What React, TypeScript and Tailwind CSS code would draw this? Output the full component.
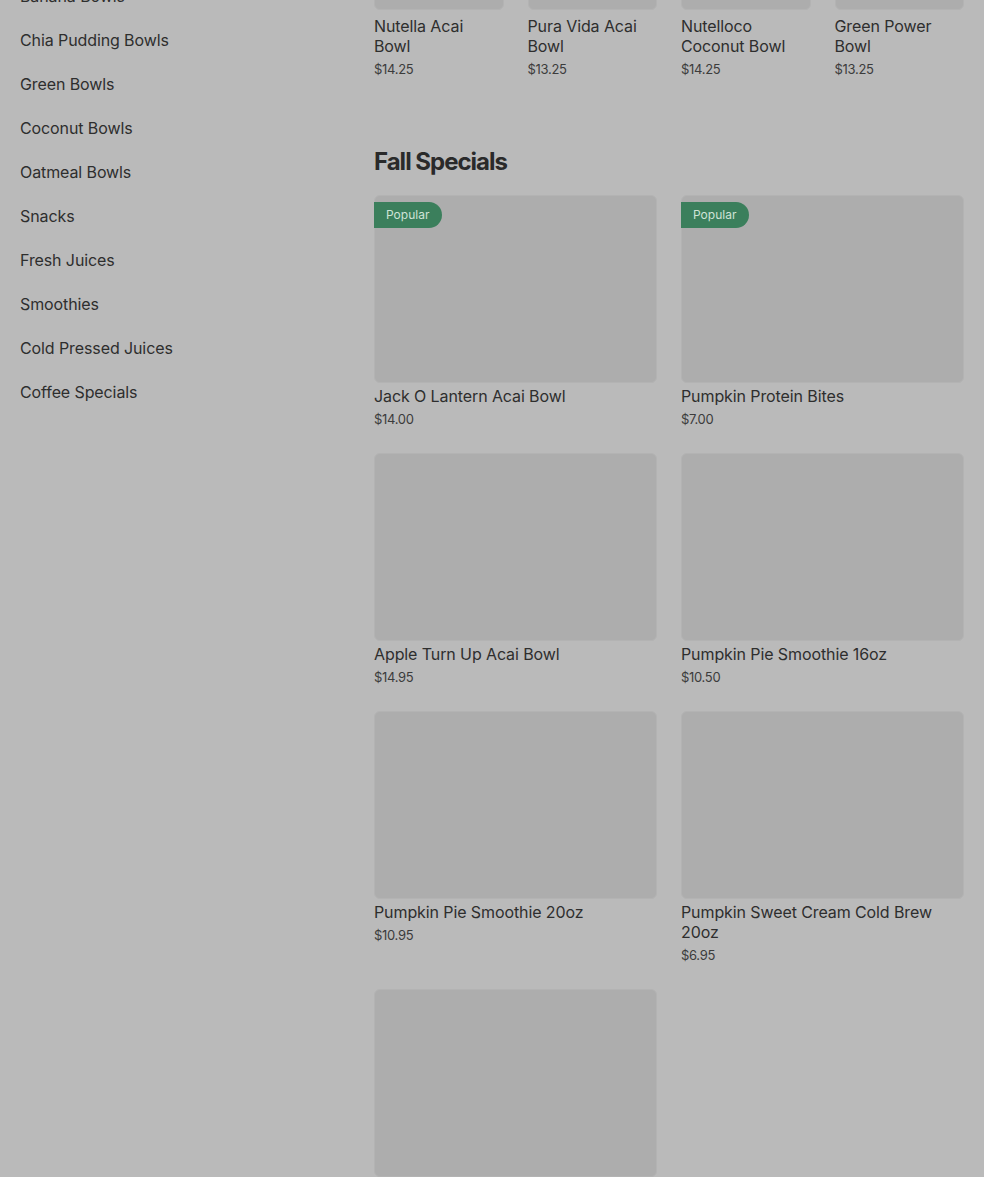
import React from "react";

const sidebar = [
  "Banana Bowls",
  "Chia Pudding Bowls",
  "Green Bowls",
  "Coconut Bowls",
  "Oatmeal Bowls",
  "Snacks",
  "Fresh Juices",
  "Smoothies",
  "Cold Pressed Juices",
  "Coffee Specials",
];

const topItems = [
  { name: "Nutella Acai Bowl", price: "$14.25" },
  { name: "Pura Vida Acai Bowl", price: "$13.25" },
  { name: "Nutelloco Coconut Bowl", price: "$14.25" },
  { name: "Green Power Bowl", price: "$13.25" },
];

const fall = [
  { name: "Jack O Lantern Acai Bowl", price: "$14.00", popular: true },
  { name: "Pumpkin Protein Bites", price: "$7.00", popular: true },
  { name: "Apple Turn Up Acai Bowl", price: "$14.95" },
  { name: "Pumpkin Pie Smoothie 16oz", price: "$10.50" },
  { name: "Pumpkin Pie Smoothie 20oz", price: "$10.95" },
  { name: "Pumpkin Sweet Cream Cold Brew 20oz", price: "$6.95" },
  { name: "", price: "" },
];

export default function App() {
  return (
    <div
      className="w-[984px] h-[1177px] overflow-hidden bg-[#bababa] text-[#303030]"
      style={{ fontFamily: "Inter, 'Noto Sans', sans-serif" }}
    >
      <div className="flex">
        <aside className="w-[374px] shrink-0 pl-5 -mt-[26px]">
          {sidebar.map((s) => (
            <div key={s} className="h-[44px] flex items-center text-[16px] font-normal tracking-[-0.1px] text-[#2e2e2e]">
              {s}
            </div>
          ))}
        </aside>
        <main className="flex-1 pr-5">
          <div className="-mt-[120px] grid grid-cols-4 gap-x-6">
            {topItems.map((it) => (
              <div key={it.name}>
                <div className="h-[130px] rounded-md bg-[#adadad] border border-[#b3b3b3]" />
                <div className="mt-[6px] pr-[10px] text-[16px] leading-[20px] font-normal tracking-[-0.1px] text-[#2e2e2e]">{it.name}</div>
                <div className="mt-[4px] text-[13px] leading-[18px] tracking-[-0.3px] text-[#3c3c3c]">{it.price}</div>
              </div>
            ))}
          </div>
          <h2 className="mt-[68px] text-[24px] leading-[32px] font-bold tracking-[-1px] text-[#2a2a2a]">
            Fall Specials
          </h2>
          <div className="mt-[17px] grid grid-cols-2 gap-x-6 gap-y-[25px]">
            {fall.map((it, i) => (
              <div key={i}>
                <div className="relative h-[188px] rounded-md bg-[#adadad] border border-[#b3b3b3]">
                  {it.popular && (
                    <span className="absolute left-[-1px] top-[6px] h-[26px] w-[68px] flex items-center pl-3 rounded-r-full bg-[#3b7f5c] text-[12px] text-[#cfe3d6]">
                      Popular
                    </span>
                  )}
                </div>
                {it.name && (
                  <>
                    <div className="mt-[3px] text-[16px] leading-[20px] font-normal tracking-[-0.1px] text-[#2e2e2e]">{it.name}</div>
                    <div className="mt-[4px] text-[13px] leading-[18px] tracking-[-0.3px] text-[#3c3c3c]">{it.price}</div>
                  </>
                )}
              </div>
            ))}
          </div>
        </main>
      </div>
    </div>
  );
}
